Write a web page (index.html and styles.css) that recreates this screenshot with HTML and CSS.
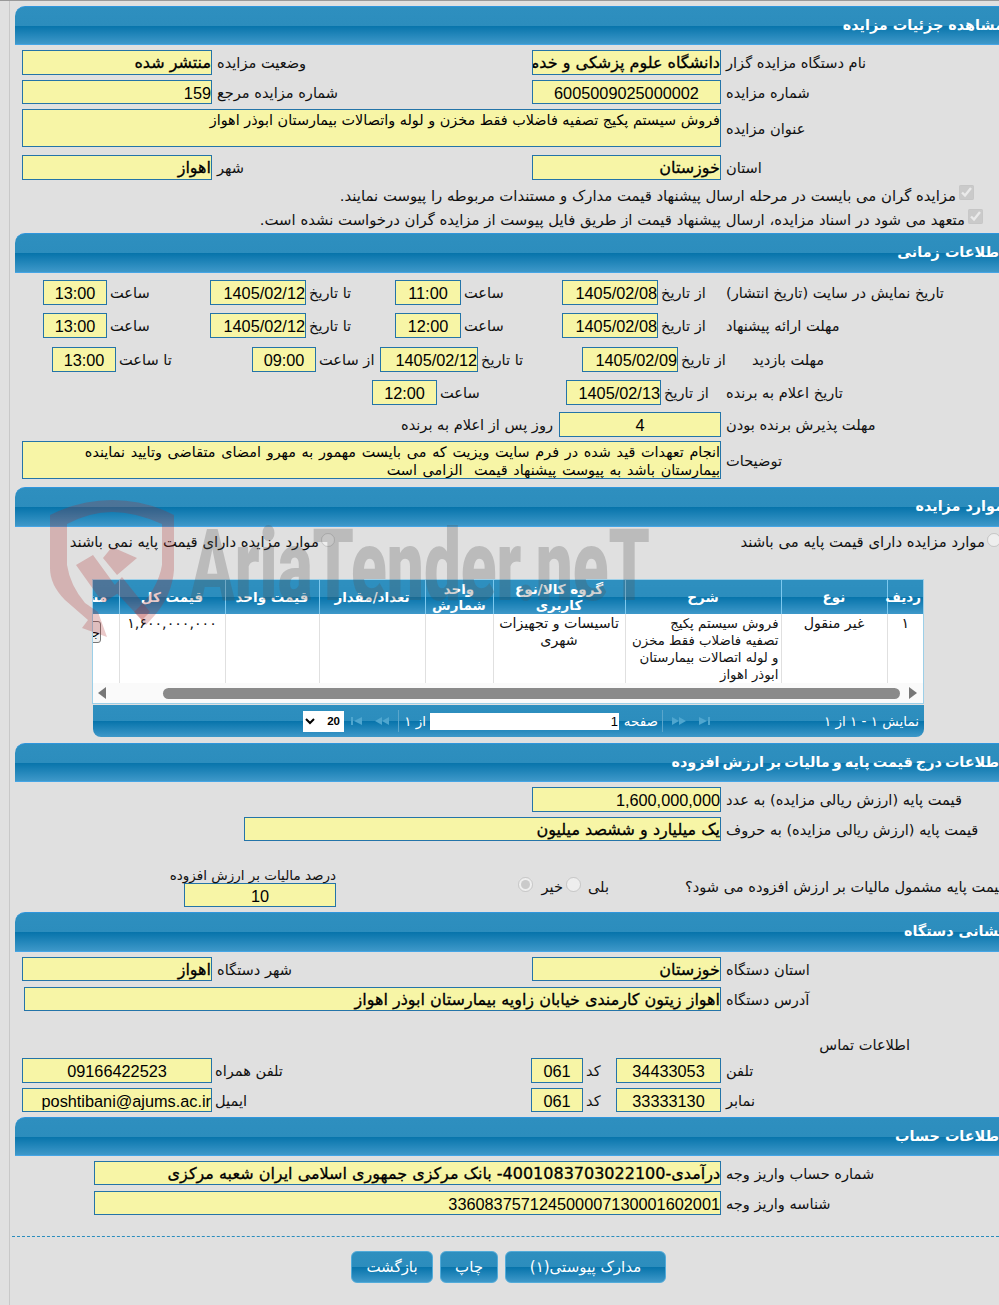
FILE: index.html
```html
<!DOCTYPE html>
<html lang="fa">
<head>
<meta charset="utf-8">
<title>مشاهده جزئیات مزایده</title>
<link rel="stylesheet" href="styles.css">
</head>
<body>
<div class="page">
<main class="inner">

<section class="sec">
  <h2 class="head h39">مشاهده جزئیات مزایده</h2>
  <div class="row two mt5 h25"><div class="lbl">نام دستگاه مزایده گزار</div><div class="f fb">دانشگاه علوم پزشکی و خدمات بهداشتی درمانی اهواز</div><div class="lbl">وضعیت مزایده</div><div class="f fb">منتشر شده</div></div>
  <div class="row two mt5 h24"><div class="lbl">شماره مزایده</div><div class="f c">6005009025000002</div><div class="lbl">شماره مزایده مرجع</div><div class="f">159</div></div>
  <div class="row text mt5 h38"><div class="lbl">عنوان مزایده</div><div class="f area">فروش سیستم پکیج تصفیه فاضلاب فقط مخزن و لوله واتصالات بیمارستان ابوذر اهواز</div></div>
  <div class="row two mt8 h25"><div class="lbl">استان</div><div class="f fb">خوزستان</div><div class="lbl">شهر</div><div class="f fb">اهواز</div></div>
  <label class="check mt4 chk1"><input type="checkbox" checked disabled><span>مزایده گران می بایست در مرحله ارسال پیشنهاد قیمت مدارک و مستندات مربوطه را پیوست نمایند.</span></label>
  <label class="check chk2"><input type="checkbox" checked disabled><span>متعهد می شود در اسناد مزایده، ارسال پیشنهاد قیمت از طریق فایل پیوست از مزایده گران درخواست نشده است.</span></label>
</section>

<section class="sec mt1">
  <h2 class="head h40">اطلاعات زمانی</h2>
  <div class="row dates1 mt7 h25"><div class="lbl">تاریخ نمایش در سایت (تاریخ انتشار)</div><div class="lbl">از تاریخ</div><div class="f">1405/02/08</div><div class="lbl">ساعت</div><div class="f c">11:00</div><div class="lbl">تا تاریخ</div><div class="f">1405/02/12</div><div class="lbl">ساعت</div><div class="f c">13:00</div></div>
  <div class="row dates1 mt8 h25"><div class="lbl">مهلت ارائه پیشنهاد</div><div class="lbl">از تاریخ</div><div class="f">1405/02/08</div><div class="lbl">ساعت</div><div class="f c">12:00</div><div class="lbl">تا تاریخ</div><div class="f">1405/02/12</div><div class="lbl">ساعت</div><div class="f c">13:00</div></div>
  <div class="row dates2 mt9 h25"><div class="lbl lbl-visit">مهلت بازدید</div><div class="lbl">از تاریخ</div><div class="f">1405/02/09</div><div class="lbl">تا تاریخ</div><div class="f">1405/02/12</div><div class="lbl">از ساعت</div><div class="f c">09:00</div><div class="lbl">تا ساعت</div><div class="f c">13:00</div></div>
  <div class="row dates3 mt8 h25"><div class="lbl">تاریخ اعلام به برنده</div><div class="lbl">از تاریخ</div><div class="f">1405/02/13</div><div class="lbl">ساعت</div><div class="f c">12:00</div></div>
  <div class="row days mt7 h25"><div class="lbl">مهلت پذیرش برنده بودن</div><div class="f c">4</div><div class="lbl">روز پس از اعلام به برنده</div></div>
  <div class="row text mt4 h38"><div class="lbl">توضیحات</div><div class="f area area-wide">انجام تعهدات قید شده در فرم سایت ویزیت که می بایست مهمور به مهرو امضای متقاضی وتایید نماینده
بیمارستان باشد به پیوست پیشنهاد قیمت  الزامی است</div></div>
</section>

<section class="sec mt8">
  <h2 class="head h40">موارد مزایده</h2>
  <div class="row radios mt5"><label class="opt"><input type="radio" name="base" disabled><span>موارد مزایده دارای قیمت پایه می باشند</span></label><label class="opt"><input type="radio" name="base" disabled><span>موارد مزایده دارای قیمت پایه نمی باشند</span></label></div>
  <div class="grid-box">
    <div class="grid-clip">
      <table class="grid">
        <thead><tr><th class="c1">ردیف</th><th class="c2">نوع</th><th class="c3">شرح</th><th class="c4">گروه کالا/نوع کاربری</th><th class="c5">واحد شمارش</th><th class="c6">تعداد/مقدار</th><th class="c7">قیمت واحد</th><th class="c8">قیمت کل</th><th class="c9">مشاهده</th></tr></thead>
        <tbody><tr><td class="mid">۱</td><td class="mid">غیر منقول</td><td class="desc">فروش سیستم پکیج<br>تصفیه فاضلاب فقط مخزن<br>و لوله اتصالات بیمارستان<br>ابوذر اهواز</td><td class="mid">تاسیسات و تجهیزات شهری</td><td></td><td></td><td></td><td class="mid">۱,۶۰۰,۰۰۰,۰۰۰</td><td class="mid"><button class="view" type="button">جزئیات</button></td></tr></tbody>
      </table>
    </div>
    <div class="hscroll">
      <span class="arr arr-r"></span>
      <span class="thumb"></span>
      <span class="arr arr-l"></span>
    </div>
  </div>
  <div class="pager">
    <span class="pg-info">نمایش ۱ - ۱ از ۱</span>
    <span class="pg-ico">
      <svg width="16" height="10" viewBox="0 0 16 10"><path d="M3 1l8 4-8 4zM12 1h2v8h-2z"/></svg>
    </span>
    <span class="pg-ico pg-ico2">
      <svg width="16" height="10" viewBox="0 0 16 10"><path d="M1 1l7 4-7 4zM8 1l7 4-7 4z"/></svg>
    </span>
    <span class="pg-sep"></span>
    <span class="pg-txt">صفحه</span>
    <span class="pg-input">1</span>
    <span class="pg-txt pg-of">از ۱</span>
    <span class="pg-sep pg-sep2"></span>
    <span class="pg-ico pg-ico3">
      <svg width="16" height="10" viewBox="0 0 16 10"><path d="M15 1L8 5l7 4zM8 1L1 5l7 4z"/></svg>
    </span>
    <span class="pg-ico pg-ico4">
      <svg width="16" height="10" viewBox="0 0 16 10"><path d="M13 1L5 5l8 4zM2 1h2v8H2z"/></svg>
    </span>
    <select class="pg-select"><option>20</option></select>
  </div>
</section>

<section class="sec mt6">
  <h2 class="head h39 long">اطلاعات درج قیمت پایه و مالیات بر ارزش افزوده</h2>
  <div class="row single mt5 h25"><div class="lbl">قیمت پایه (ارزش ریالی مزایده) به عدد</div><div class="f">1,600,000,000</div></div>
  <div class="row wide mt5 h24"><div class="lbl">قیمت پایه (ارزش ریالی مزایده) به حروف</div><div class="f fb">یک میلیارد و ششصد میلیون</div></div>
  <div class="row vat mt25">
    <div class="vat-q">قیمت پایه مشمول مالیات بر ارزش افزوده می شود؟</div>
    <div class="vat-opts"><span>بلی</span><input type="radio" name="vat" disabled><span>خیر</span><input type="radio" name="vat" checked disabled></div>
    <div class="vat-pct"><div class="vat-lbl">درصد مالیات بر ارزش افزوده</div><div class="f c h24">10</div></div>
  </div>
</section>

<section class="sec mt4">
  <h2 class="head h40">نشانی دستگاه</h2>
  <div class="row two mt5 h24"><div class="lbl">استان دستگاه</div><div class="f fb">خوزستان</div><div class="lbl">شهر دستگاه</div><div class="f fb">اهواز</div></div>
  <div class="row addr mt6 h24"><div class="lbl">آدرس دستگاه</div><div class="f fb">اهواز زیتون کارمندی خیابان زاویه بیمارستان ابوذر اهواز</div></div>
  <div class="contact-title">اطلاعات تماس</div>
  <div class="row phone mt3 h25"><div class="lbl">تلفن</div><div class="f c">34433053</div><div class="lbl">کد</div><div class="f c">061</div><div class="lbl">تلفن همراه</div><div class="f c">09166422523</div></div>
  <div class="row phone mt5 h24"><div class="lbl">نمابر</div><div class="f c">33333130</div><div class="lbl">کد</div><div class="f c">061</div><div class="lbl">ایمیل</div><div class="f">poshtibani@ajums.ac.ir</div></div>
</section>

<section class="sec mt5">
  <h2 class="head h39">اطلاعات حساب</h2>
  <div class="row acct mt5 h24"><div class="lbl">شماره حساب واریز وجه</div><div class="f fb">درآمدی-4001083703022100- بانک مرکزی جمهوری اسلامی ایران شعبه مرکزی</div></div>
  <div class="row acct mt6 h24"><div class="lbl">شناسه واریز وجه</div><div class="f">336083757124500007130001602001</div></div>
</section>

<hr class="dash">
<div class="actions">
  <button class="btn b1" type="button">مدارک پیوستی(۱)</button>
  <button class="btn b2" type="button">چاپ</button>
  <button class="btn b3" type="button">بازگشت</button>
</div>

</main>
<svg class="mark" width="620" height="150" viewBox="40 495 620 150" aria-hidden="true">
  <path class="mark-red" d="M50 515 Q80 500 112 500 Q145 500 174 515 V570 Q172 595 155 615 L146 625 L134 612 Q158 590 162 565 V524 Q135 512 112 512 Q90 512 67 524 V565 Q70 585 85 603 L98 612 L107 637 L82 628 L88 620 L65 600 Q50 585 50 568 Z"/>
  <path class="mark-red" d="M76 565 L93 555 L120 592 L103 603 Z M103 558 L112 547 L137 558 L117 575 Z M122 577 L150 612 L142 620 L112 588 Z"/>
  <text class="mark-text" x="190" y="600" textLength="460" lengthAdjust="spacingAndGlyphs">AriaTender.neT</text>
</svg>
</div>
</body>
</html>
```

FILE: styles.css
```css
html, body { margin: 0; padding: 0; background: #e0e0e0; }
body { font-family: "DejaVu Sans", "Liberation Sans", sans-serif; font-size: 14.85px; color: #111; }
.page { position: relative; width: 999px; height: 1305px; overflow: hidden; border-top: 1px solid #999; box-sizing: border-box; }
.inner { box-sizing: border-box; width: 995px; margin-left: 9px; border-left: 1px solid #c8c8c8; padding-top: 5px; height: 1304px; direction: rtl; }

.sec { margin-left: 5px; }
.head { margin: 0; box-sizing: border-box; padding: 0; border-top: 1px solid #2f95dc; border-bottom: 1px solid #45a5e5; border-top-left-radius: 10px; color: #fff; font-size: 14.4px; font-weight: bold; white-space: nowrap; background: linear-gradient(to bottom, #2e8fbf 0, #2c8dbd 50%, #0774ab 51%, #3e98c9 100%); text-align: right; line-height: 37px; }
.long { word-spacing: -2px; }
.h39 { height: 39px; } .h40 { height: 40px; }
.h24 { height: 24px; } .h25 { height: 25px; } .h38 { height: 38px; }
.mt1 { margin-top: 1px; } .mt3 { margin-top: 3px; } .mt4 { margin-top: 4px; } .mt5 { margin-top: 5px; } .mt6 { margin-top: 6px; } .mt7 { margin-top: 7px; } .mt8 { margin-top: 8px; } .mt9 { margin-top: 9px; } .mt25 { margin-top: 25px; }

.row { display: grid; align-items: stretch; }
.lbl { box-sizing: border-box; padding-left: 5px; white-space: nowrap; display: flex; align-items: center; justify-content: flex-end; font-size: 14.6px; }
.f { box-sizing: border-box; border: 1px solid #2474a8; background: #f7f5a6; color: #000; font-family: "Liberation Sans", "DejaVu Sans", sans-serif; font-size: 16.3px; line-height: 24px; text-align: right; white-space: nowrap; overflow: hidden; min-width: 0; }
.fb { font-family: "DejaVu Sans", sans-serif; font-size: 16px; -webkit-text-stroke: 0.3px #000; line-height: 24px; }
.c { text-align: center; }
.area { white-space: normal; font-family: "DejaVu Sans", sans-serif; font-size: 14.4px; line-height: 18px; padding-top: 1px; }
.area-wide { white-space: pre-wrap; word-spacing: 1.1px; }

.two { grid-template-columns: 283px 189px 320px 190px; }
.text { grid-template-columns: 283px 699px; }
.single { grid-template-columns: 283px 189px; }
.wide { grid-template-columns: 283px 477px; }
.addr { grid-template-columns: 283px 697px; }
.acct { grid-template-columns: 283px 627px; }
.dates1 { grid-template-columns: 283px 63px 96px 101px 66px 89px 96px 103px 64px; }
.dates2 { grid-template-columns: 283px 43px 96px 104px 98px 64px 64px 136px 64px; }
.dates3 { grid-template-columns: 283px 60px 95px 129px 65px; }
.days { grid-template-columns: 283px 162px 161px; }
.phone { grid-template-columns: 283px 105px 33px 52px 319px 190px; }
[class*="dates"] .lbl:not(:first-child), .days .lbl:not(:first-child), .phone .lbl:not(:first-child) { padding-left: 3px; }
.dates2 .lbl-visit { padding-left: 31px; }

.check { display: flex; align-items: center; height: 24px; gap: 3px; white-space: nowrap; }
.check input, .opt input, .vat input { margin: 0; flex: none; }
.check input { width: 15px; height: 15px; margin-bottom: 7px; }
.chk1 { padding-right: 30px; } .chk2 { padding-right: 21px; }

.radios { grid-template-columns: 669px auto; height: 20px; justify-content: start; }
.opt { display: flex; align-items: center; gap: 2px; white-space: nowrap; padding-right: 3px; }
.opt + .opt { padding-right: 0; }
.opt input { width: 14px; height: 14px; margin-bottom: 4px; }

.grid-box { box-sizing: border-box; margin-top: 27px; margin-right: 80px; width: 832px; height: 125px; border: 1px solid #9ccfe8; background: #fff; }
.grid-clip { overflow: hidden; height: 103px; }
.grid { border-collapse: collapse; table-layout: fixed; width: 880px; }
.grid th { height: 34px; padding: 0 2px 1px; box-sizing: border-box; border-left: 1px solid #7cc8ee; color: #fff; font-size: 13.5px; font-weight: bold; line-height: 16px; background: linear-gradient(to bottom, #2e8fbf 0, #2c8dbd 50%, #0774ab 51%, #3e98c9 100%); }
.c1 { width: 36px; } .c2 { width: 106px; } .c3 { width: 156px; } .c4 { width: 132px; } .c5 { width: 68px; } .c6 { width: 106px; } .c7 { width: 94px; } .c8 { width: 106px; } .c9 { width: 76px; }
.grid td { height: 68px; box-sizing: border-box; border-left: 1px solid #e0e0e0; border-bottom: 1px solid #e0e0e0; vertical-align: top; padding: 1px 2px; line-height: 17px; font-size: 14.2px; }
.mid { text-align: center; }
.grid .desc { text-align: right; font-size: 13.3px; white-space: nowrap; }
.view { margin-top: 6px; width: 40px; height: 22px; padding: 0; font: 13px "DejaVu Sans", sans-serif; background: #f0f0f0; border: 1px solid #777; border-radius: 3px; }

.hscroll { position: relative; height: 20px; background: #fafafa; display: flex; align-items: center; direction: ltr; }
.thumb { position: absolute; left: 70px; width: 737px; height: 11px; border-radius: 6px; background: #8a8a8a; }
.arr { position: absolute; width: 0; height: 0; border-top: 6px solid transparent; border-bottom: 6px solid transparent; }
.arr-r { left: 5px; border-right: 8px solid #777; }
.arr-l { right: 6px; border-left: 8px solid #777; }

.pager { position: relative; box-sizing: border-box; margin-top: 1px; margin-right: 80px; width: 831px; height: 32px; border-radius: 0 0 8px 8px; background: linear-gradient(to bottom, #2e8fbf 0, #2c8dbd 50%, #0774ab 51%, #3e98c9 100%); color: #fff; font-size: 13.5px; display: flex; align-items: center; white-space: nowrap; }
.pg-info { margin-right: 5px; width: 200px; flex: none; }
.pg-ico { flex: none; width: 16px; height: 10px; margin-right: 7px; fill: #4fa6cf; display: flex; }
.pg-ico2 { margin-right: 9px; }
.pg-sep { flex: none; width: 1px; height: 22px; background: #5aa6cc; margin-right: 8px; margin-left: 4px; }
.pg-txt { flex: none; width: 35px; }
.pg-input { flex: none; box-sizing: border-box; width: 189px; height: 17px; margin-right: 4px; background: #fff; color: #000; font: 13px/17px "Liberation Sans", sans-serif; padding-right: 1px; }
.pg-of { margin-right: 4px; width: 24px; }
.pg-sep2 { margin-right: 3px; margin-left: 0; }
.pg-ico3 { margin-right: 8px; }
.pg-ico4 { margin-right: 9px; }
.pg-select { flex: none; width: 41px; height: 21px; margin-right: 5px; border: 0; background: #fff; font: bold 11.5px "Liberation Sans", sans-serif; padding: 0; }

.vat { grid-template-columns: 319px 349px 152px; height: 42px; }
.vat-q { white-space: nowrap; align-self: center; display: flex; justify-content: flex-end; padding-bottom: 2px; font-size: 14.6px; }
.vat-opts { display: flex; align-items: center; padding-right: 76px; align-self: center; height: 24px; font-size: 14.6px; }
.vat-opts span { padding-bottom: 2px; }
.vat-opts span:nth-of-type(1) { margin-left: 7px; }
.vat-opts span:nth-of-type(2) { margin-right: 3px; margin-left: 8px; }
.vat input { width: 15px; height: 15px; margin-bottom: 5px; }
.vat-lbl { height: 17px; white-space: nowrap; line-height: 18px; font-size: 13.5px; }

.contact-title { margin-top: 24px; height: 20px; line-height: 20px; padding-right: 94px; font-size: 14.6px; }

.dash { margin: 21px 0 0 2px; height: 0; border: 0; border-top: 1px dashed #2b8dbd; }
.actions { display: flex; gap: 7px; margin-top: 14px; padding-right: 338px; }
.btn { box-sizing: border-box; height: 32px; border: 1px solid #52abd9; border-radius: 6px; color: #fff; font: 15px "DejaVu Sans", sans-serif; background: linear-gradient(to bottom, #2e8fbf 0, #2c8dbd 50%, #0774ab 51%, #3e98c9 100%); padding: 0; }
.b1 { width: 161px; } .b2 { width: 58px; } .b3 { width: 82px; }

.mark { position: absolute; left: 40px; top: 494px; pointer-events: none; }
.mark-red { fill: rgba(170, 40, 40, 0.25); }
.mark-text { font-family: "Roboto", sans-serif; font-weight: 900; font-size: 100px; fill: rgba(80, 80, 80, 0.26); }
```
